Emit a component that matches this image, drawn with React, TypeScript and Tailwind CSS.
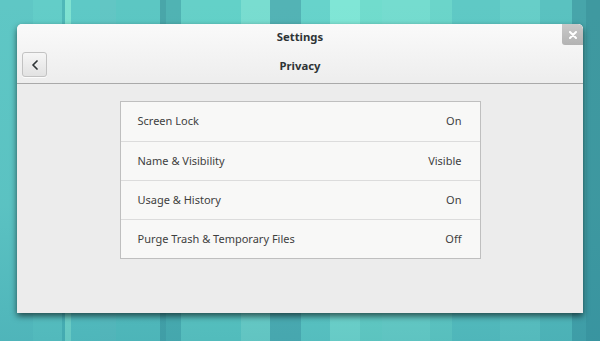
import React from "react";

const stripes: [number, number, string][] = [
  [0, 33, "#5fc7c5"],
  [33, 62, "#63cdc8"],
  [62, 65, "#4fb8b8"],
  [65, 71, "#7fe2d1"],
  [71, 100, "#5ec9c6"],
  [100, 116, "#62c6c4"],
  [116, 160, "#5cc7c3"],
  [160, 166, "#49a6a9"],
  [166, 181, "#50b3b3"],
  [181, 200, "#66d0c8"],
  [200, 241, "#63d1c8"],
  [241, 270, "#79ddd0"],
  [270, 301, "#53b3b5"],
  [301, 330, "#67d3cb"],
  [330, 360, "#80e6d6"],
  [360, 382, "#71dccd"],
  [382, 430, "#75dccf"],
  [430, 452, "#6bd5ca"],
  [452, 500, "#5fc9c5"],
  [500, 540, "#67cec8"],
  [540, 572, "#5ac2c0"],
  [572, 586, "#47a5aa"],
  [586, 600, "#3f99a0"],
];

function Wallpaper() {
  return (
    <svg className="absolute inset-0" width="600" height="341" viewBox="0 0 600 341">
      <defs>
        <linearGradient id="shade" x1="0" y1="0" x2="0" y2="1">
          <stop offset="0" stopColor="#2a8aa0" stopOpacity="0" />
          <stop offset="0.6" stopColor="#2a8aa0" stopOpacity="0.08" />
          <stop offset="1" stopColor="#2a8aa0" stopOpacity="0.3" />
        </linearGradient>
      </defs>
      {stripes.map(([a, b, c], i) => (
        <rect key={i} x={a} y={0} width={b - a} height={341} fill={c} />
      ))}
      <rect x="0" y="0" width="600" height="341" fill="url(#shade)" />
    </svg>
  );
}

const rows: [string, string][] = [
  ["Screen Lock", "On"],
  ["Name & Visibility", "Visible"],
  ["Usage & History", "On"],
  ["Purge Trash & Temporary Files", "Off"],
];

export default function App() {
  return (
    <div
      className="relative w-[600px] h-[341px] overflow-hidden"
      style={{ fontFamily: '"Noto Sans", "DejaVu Sans", sans-serif' }}
    >
      <Wallpaper />
      <div className="relative pt-[24px] pl-[17px]">
        <div className="w-[566px] h-[289px] rounded-t-[5px] bg-[#ececec] flex flex-col shadow-[0_3px_6px_rgba(0,0,0,0.6)] overflow-hidden">
          <div className="bg-gradient-to-b from-[#fafafa] to-[#ededed] border-b border-[#a9a9a9]">
            <div className="relative h-[26px] flex items-center justify-center pt-[1px]">
              <span className="text-[11.3px] font-bold text-[#2e3436]">Settings</span>
              <div className="absolute top-0 right-0 w-[21px] h-[21px] rounded-tr-[5px] rounded-bl-[3px] bg-gradient-to-b from-[#c9c9c9] to-[#b3b3b3] flex items-center justify-center">
                <svg width="8" height="8" viewBox="0 0 8 8">
                  <path d="M1 1L7 7M7 1L1 7" stroke="#ffffff" strokeWidth="2" strokeLinecap="round" />
                </svg>
              </div>
            </div>
            <div className="relative h-[33px] flex items-center justify-center">
              <div className="absolute left-[5px] top-[2px] w-[25px] h-[25px] rounded-[3px] border border-[#c2c2c2] bg-gradient-to-b from-[#f6f6f6] to-[#e2e2e2] flex items-center justify-center shadow-[0_1px_0_rgba(255,255,255,0.8)]">
                <svg width="8" height="10" viewBox="0 0 8 10">
                  <path d="M6 1L2 5L6 9" stroke="#2e3436" strokeWidth="1.7" fill="none" strokeLinecap="round" strokeLinejoin="round" />
                </svg>
              </div>
              <span className="text-[11.3px] font-bold text-[#2e3436] -mt-[1px]">Privacy</span>
            </div>
          </div>
          <div className="flex justify-center pt-[17px]">
            <div className="w-[361px] border border-[#bfbfbf] bg-[#f8f8f7] flex flex-col">
              {rows.map(([label, value], i) => (
                <div
                  key={label}
                  className={`h-[39px] flex items-center justify-between pl-[17px] pr-[18px] text-[11px] text-[#3e4040] ${
                    i > 0 ? "border-t border-[#dcdcdc]" : ""
                  }`}
                >
                  <span>{label}</span>
                  <span>{value}</span>
                </div>
              ))}
            </div>
          </div>
        </div>
      </div>
    </div>
  );
}
